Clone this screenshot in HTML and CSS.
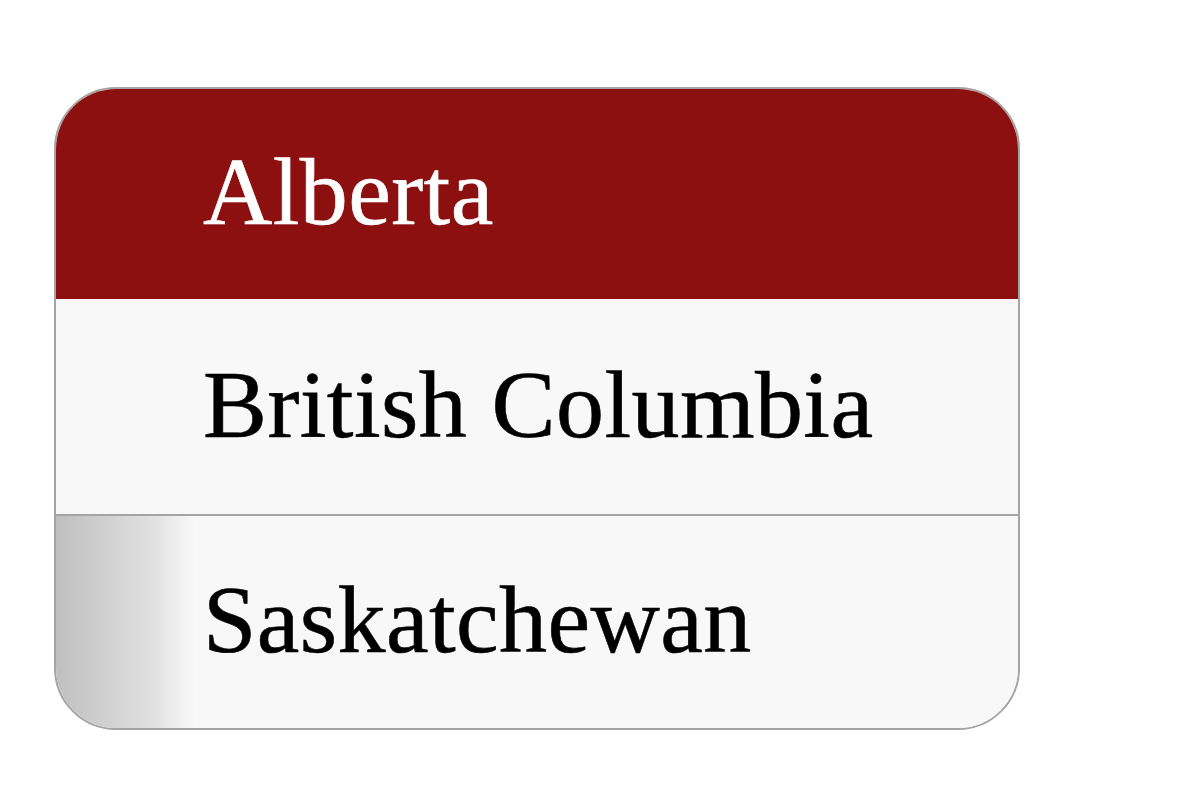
FILE: index.html
```html
<!DOCTYPE html>
<html>
<head>
<meta charset="utf-8">
<link rel="stylesheet" href="styles.css">
</head>
<body>
<ul class="list">
  <li class="item item-active">Alberta</li>
  <li class="item item-sep">British Columbia</li>
  <li class="item item-hover">Saskatchewan</li>
</ul>
</body>
</html>
```
FILE: styles.css
```css
html, body {
  margin: 0;
  padding: 0;
  background: #ffffff;
}
body {
  padding: 87px 0 0 54px;
  font-family: "Liberation Serif", "Times New Roman", serif;
}
.list {
  list-style: none;
  margin: 0;
  padding: 0;
  width: 962px;
  border: 2px solid #a4a4a4;
  border-radius: 62px;
  overflow: hidden;
  background: #f8f8f8;
}
.item {
  display: flex;
  align-items: center;
  box-sizing: border-box;
  padding-left: 147px;
  padding-bottom: 6px;
  font-size: 96px;
  letter-spacing: 0.4px;
  -webkit-text-stroke: 0.6px currentColor;
  color: #000;
  height: 212px;
}
.item-active {
  height: 210px;
  background: #8c1010;
  color: #fff;
}
.item-sep {
  border-top: 1px solid #fcfcfc;
  border-bottom: 2px solid #a4a4a4;
  height: 217px;
}
.item-hover {
  background: linear-gradient(to right, #bfbfbf 0, #cfcfcf 45px, #e2e2e2 100px, #f3f3f3 128px, #f8f8f8 140px);
}
```
